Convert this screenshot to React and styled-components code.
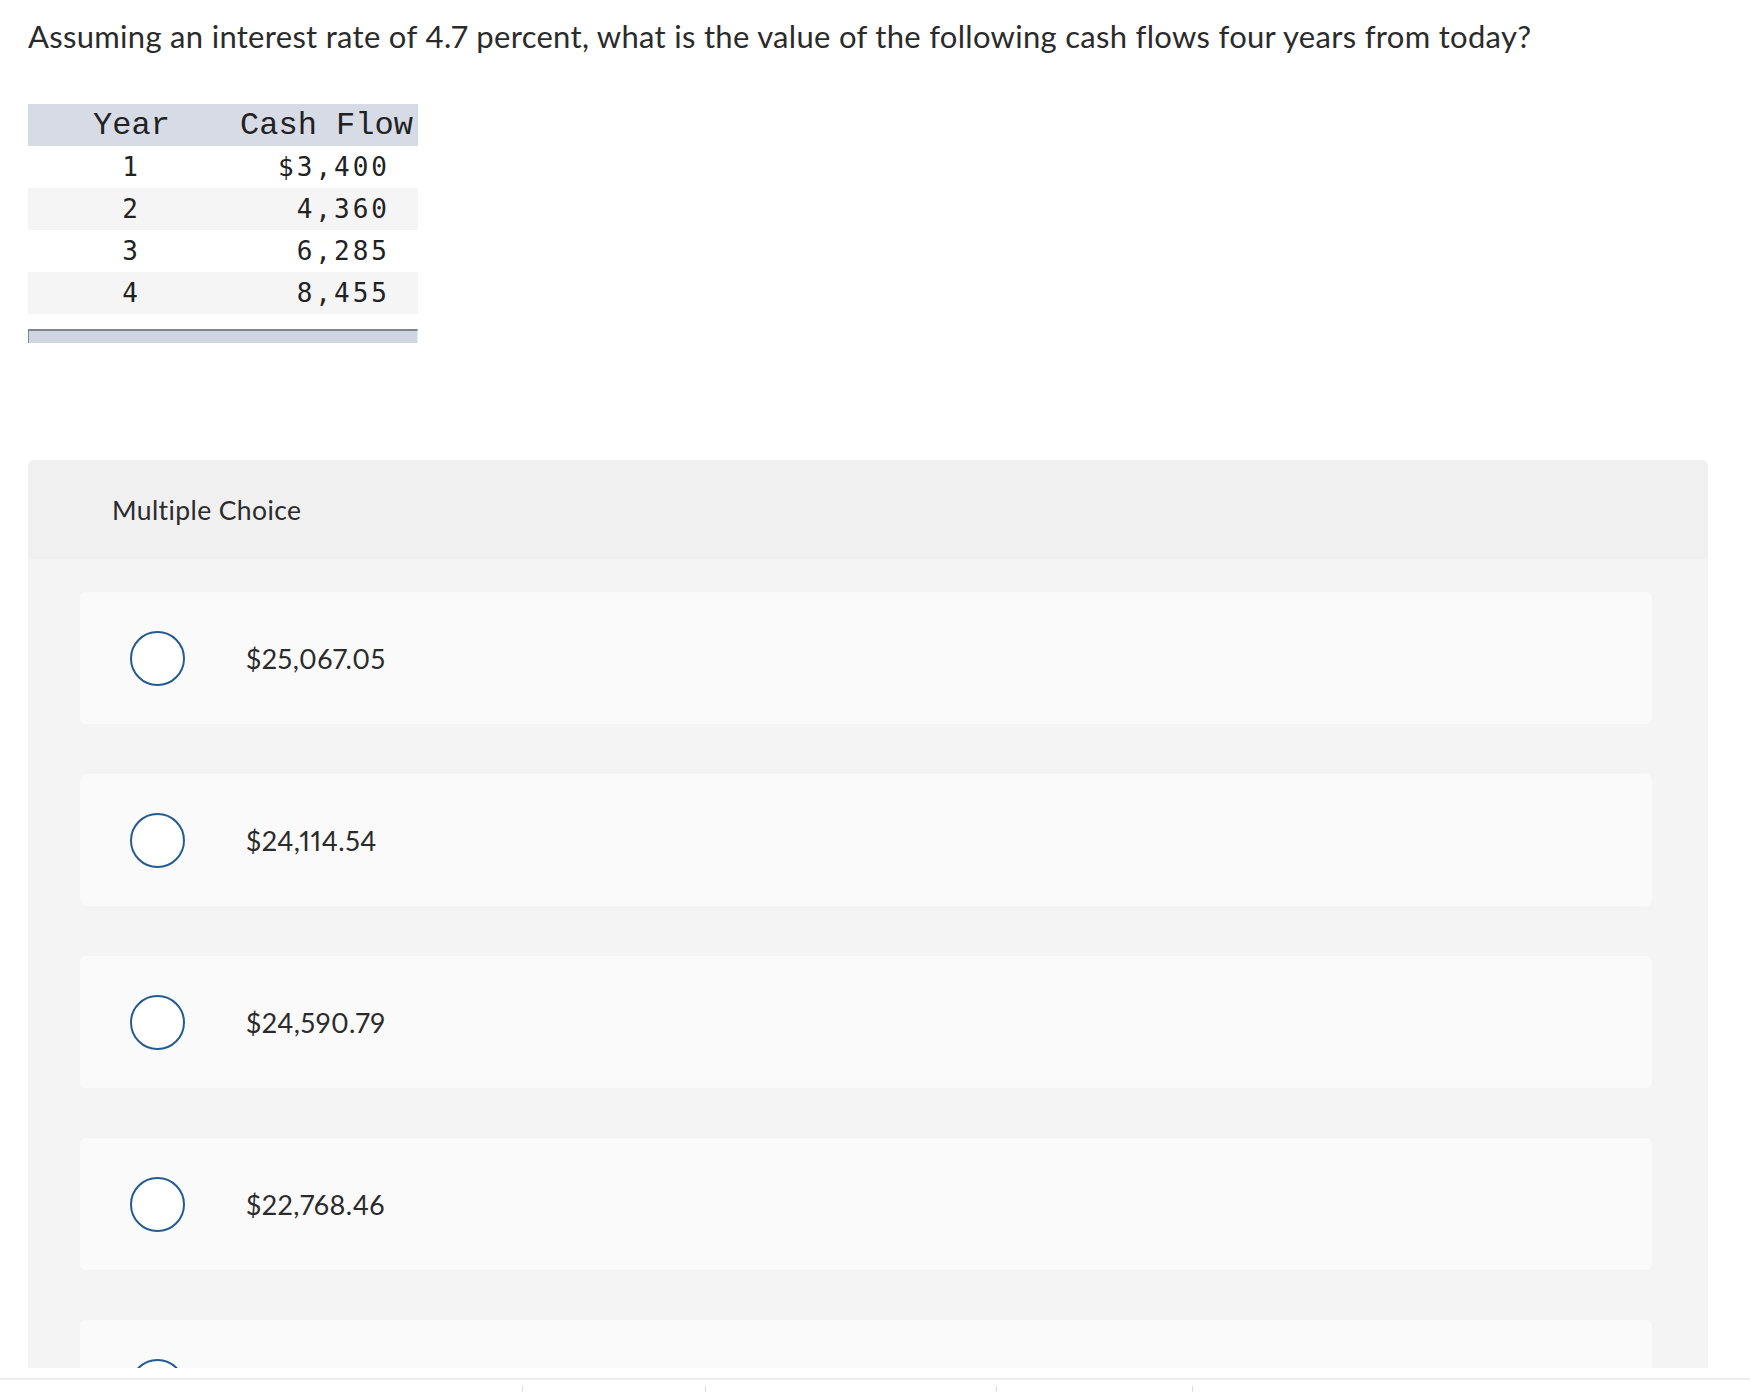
import React from "react";
import styled, { createGlobalStyle } from "styled-components";

const GlobalStyle = createGlobalStyle`
  html, body { margin: 0; padding: 0; background: #ffffff; }
  body { font-family: Lato, "Open Sans", Arial, sans-serif; color: #2b2b2b; }
  * { box-sizing: border-box; }
`;

const Viewport = styled.div`
  height: 1368px;
  overflow: hidden;
  padding: 18px 42px 0 28px;
`;

const Question = styled.p`
  margin: 0;
  font-size: 31px;
  line-height: 36px;
  letter-spacing: 0.3px;
  color: #2b2b2b;
  font-variant-numeric: proportional-nums;
`;

const DataTable = styled.table`
  margin-top: 50px;
  width: 390px;
  border-collapse: collapse;
  border-spacing: 0;
`;

const HeadCell = styled.th`
  height: 42px;
  padding: 2px 0 0;
  background: #d7dbe6;
  font-family: "Liberation Mono", "Courier New", monospace;
  font-size: 32px;
  font-weight: normal;
  line-height: 40px;
  color: #222;
  text-align: center;
  white-space: nowrap;
  width: ${(p) => p.$w}px;
`;

const Row = styled.tr`
  background: ${(p) => (p.$alt ? "#f5f5f5" : "#ffffff")};
`;

const Cell = styled.td`
  height: 42px;
  padding: 1px ${(p) => (p.$right ? "28px" : "0")} 0 0;
  font-family: "DejaVu Sans Mono", monospace;
  font-size: 26px;
  letter-spacing: 3px;
  line-height: 41px;
  color: #222;
  text-align: ${(p) => (p.$right ? "right" : "center")};
  white-space: nowrap;
`;

const TableFoot = styled.div`
  margin-top: 15px;
  width: 390px;
  height: 14px;
  background: #cfd5e1;
  border-top: 2px solid #80848c;
  border-left: 1px solid #80848c;
  border-right: 1px solid #e6e9f0;
`;

const Panel = styled.section`
  margin-top: 117px;
  width: 1680px;
  border-radius: 6px 6px 0 0;
  background: #f4f4f4;
  overflow: hidden;
`;

const PanelHeader = styled.div`
  height: 99px;
  background: #f0f0f0;
  padding-left: 84px;
  display: flex;
  align-items: center;
  font-size: 26.5px;
  letter-spacing: 0.4px;
  color: #2b2b2b;
`;

const Options = styled.div`
  display: flex;
  flex-direction: column;
  gap: 50px;
  padding: 33px 56px 60px 52px;
`;

const OptionCard = styled.label`
  height: 132px;
  border-radius: 6px;
  background: #fafafa;
  display: flex;
  align-items: center;
  padding-left: 50px;
  cursor: pointer;
`;

const Radio = styled.span`
  width: 55px;
  height: 55px;
  flex: none;
  border-radius: 50%;
  border: 2px solid #245b92;
  background: #ffffff;
`;

const OptionText = styled.span`
  margin-left: 61px;
  font-size: 27px;
  color: #2b2b2b;
  letter-spacing: 0.5px;
  font-variant-numeric: proportional-nums;
`;

const Footer = styled.footer`
  margin-top: 10px;
  border-top: 2px solid #eeeeee;
  height: 14px;
  display: flex;
  padding-left: 522px;
  padding-top: 6px;
`;

const FootItem = styled.span`
  width: ${(p) => p.$w}px;
  height: 8px;
  border-left: 1px solid #dcdcdc;
`;

const rows = [
  ["1", "$3,400"],
  ["2", "4,360"],
  ["3", "6,285"],
  ["4", "8,455"],
];

const choices = ["$25,067.05", "$24,114.54", "$24,590.79", "$22,768.46", ""];

export default function App() {
  return (
    <>
      <GlobalStyle />
      <Viewport>
        <Question>
          Assuming an interest rate of 4.7 percent, what is the value of the following cash flows four years from today?
        </Question>
        <DataTable>
          <thead>
            <tr>
              <HeadCell $w={207}>Year</HeadCell>
              <HeadCell $w={183}>Cash Flow</HeadCell>
            </tr>
          </thead>
          <tbody>
            {rows.map(([y, v], i) => (
              <Row key={y} $alt={i % 2 === 1}>
                <Cell>{y}</Cell>
                <Cell $right>{v}</Cell>
              </Row>
            ))}
          </tbody>
        </DataTable>
        <TableFoot />
        <Panel>
          <PanelHeader>Multiple Choice</PanelHeader>
          <Options>
            {choices.map((c, i) => (
              <OptionCard key={i}>
                <Radio />
                <OptionText>{c}</OptionText>
              </OptionCard>
            ))}
          </Options>
        </Panel>
      </Viewport>
      <Footer>
        <FootItem $w={183} />
        <FootItem $w={291} />
        <FootItem $w={196} />
        <FootItem $w={10} />
      </Footer>
    </>
  );
}
